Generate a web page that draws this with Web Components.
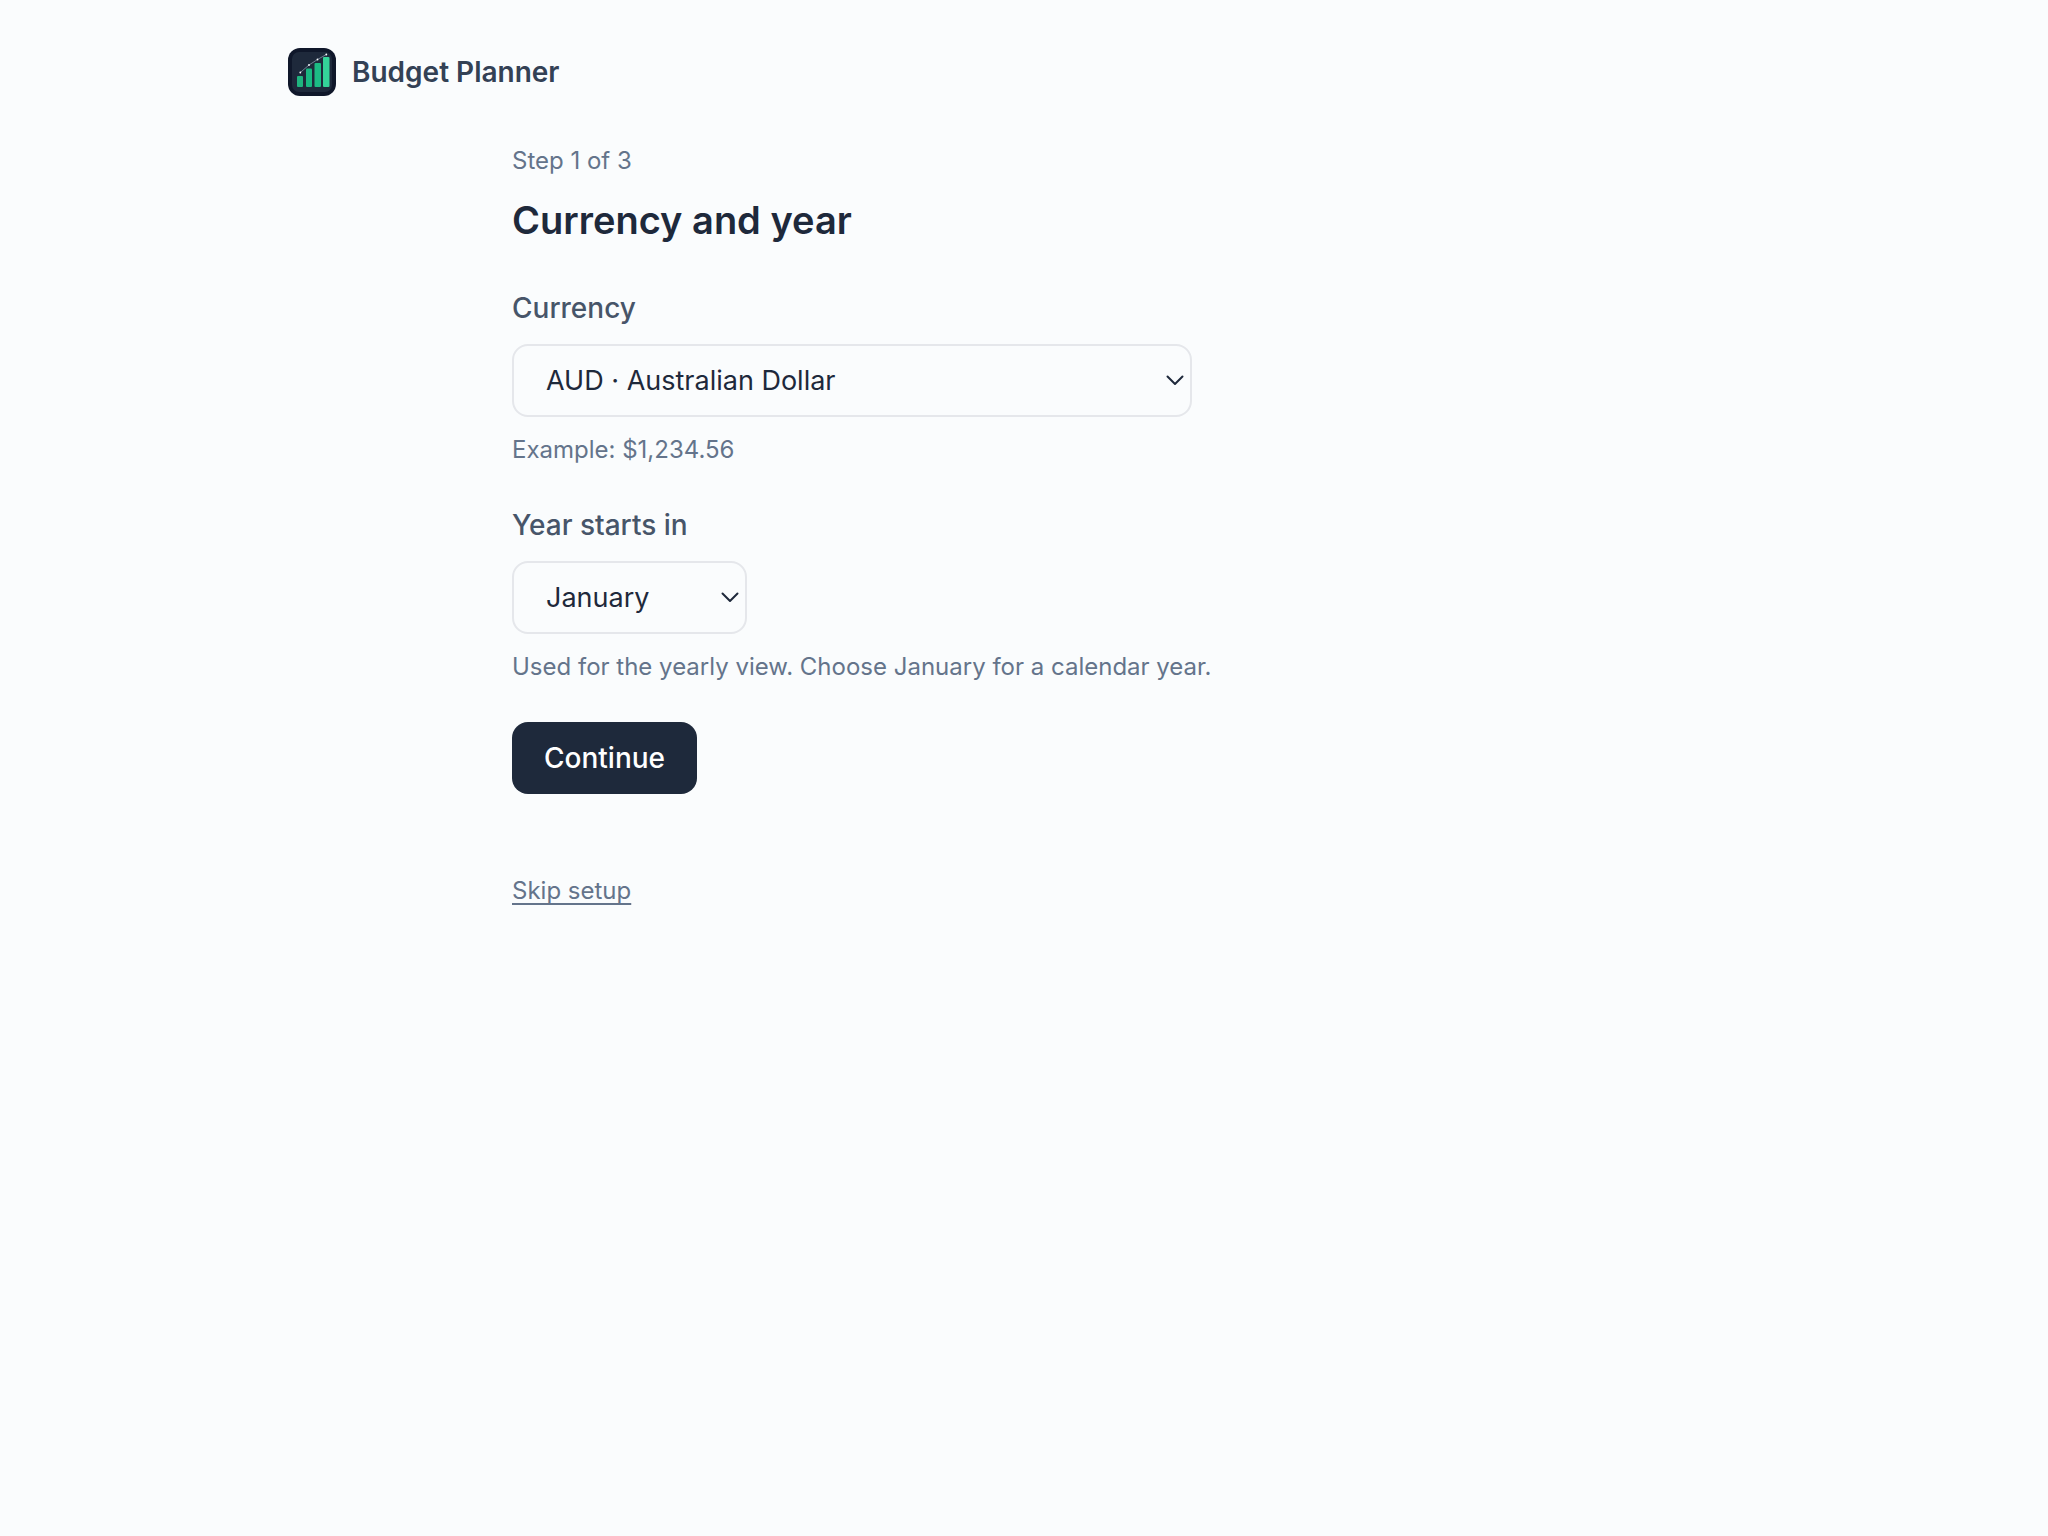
<!DOCTYPE html>
<html lang="en">
<head>
<meta charset="utf-8">
<meta name="viewport" content="width=device-width, initial-scale=1">
<title>Budget Planner</title>
<style>
  :root {
    --bg: #fafcfd;
    --ink: #1e293b;
    --heading: #334155;
    --label: #475569;
    --muted: #64748b;
    --line: #e5e7eb;
  }
  body {
    margin: 0;
    background: var(--bg);
    color: var(--ink);
    font-family: Inter, "Liberation Sans", sans-serif;
    font-size: 28px;
    line-height: 40px;
  }
</style>
</head>
<body>
<setup-page>
  <brand-bar slot="header">Budget Planner</brand-bar>
  <setup-step step="Step 1 of 3" heading="Currency and year">
    <select-field label="Currency" hint="Example: $1,234.56" style="--field-width: 680px">
      <option>AUD · Australian Dollar</option>
    </select-field>
    <select-field label="Year starts in" hint="Used for the yearly view. Choose January for a calendar year." style="--field-width: 235px">
      <option>January</option>
    </select-field>
    <primary-button slot="action">Continue</primary-button>
    <text-link slot="footer" href="#skip">Skip setup</text-link>
  </setup-step>
</setup-page>

<script>
const attach = (host, html) => {
  const root = host.attachShadow({ mode: "open" });
  root.innerHTML = html;
  return root;
};

// Centred page shell: header row above the main column.
customElements.define("setup-page", class extends HTMLElement {
  constructor() {
    super();
    attach(this, `
      <style>
        :host { display: block; }
        .shell { max-width: 1472px; margin: 0 auto; padding: 48px 32px; display: flex; flex-direction: column; gap: 48px; }
        main { width: 100%; max-width: 1024px; margin: 0 auto; }
      </style>
      <div class="shell">
        <header><slot name="header"></slot></header>
        <main><slot></slot></main>
      </div>`);
  }
});

customElements.define("brand-bar", class extends HTMLElement {
  constructor() {
    super();
    attach(this, `
      <style>
        :host { display: flex; align-items: center; gap: 16px; color: var(--heading); font-weight: 600; }
        svg { width: 48px; height: 48px; flex: none; }
      </style>
      <svg viewBox="0 0 48 48" aria-hidden="true">
        <rect width="48" height="48" rx="12" fill="#0f172a"/>
        <rect x="4" y="4" width="40" height="40" rx="7" fill="#1e293b"/>
        <rect x="9" y="28" width="6" height="11" rx="1" fill="#1fb47f"/>
        <rect x="18" y="20.5" width="6" height="18.500" rx="1" fill="#18b881"/>
        <rect x="26.500" y="15" width="6.500" height="24" rx="1" fill="#1cba84"/>
        <rect x="35" y="9" width="6.500" height="30" rx="1" fill="#34d399"/>
        <path d="M12.300 24.500 L21 17 L29.500 11.500 L38.300 6.500" fill="none" stroke="#94a3b8" stroke-width=".7"/>
        <g fill="#f8fafc"><circle cx="12.300" cy="24.500" r=".9"/><circle cx="21" cy="17" r=".9"/><circle cx="29.500" cy="11.500" r=".9"/><circle cx="38.300" cy="6.500" r=".9"/></g>
      </svg>
      <span><slot></slot></span>`);
  }
});

customElements.define("setup-step", class extends HTMLElement {
  constructor() {
    super();
    const root = attach(this, `
      <style>
        :host { display: block; }
        p { margin: 0 0 14px; font-size: 24px; line-height: 34px; color: var(--muted); }
        h1 { margin: 0 0 40px; font-size: 38px; line-height: 56px; font-weight: 600; }
        form { display: flex; flex-direction: column; align-items: flex-start; gap: 38px; }
        footer { margin-top: 80px; }
      </style>
      <p></p>
      <h1></h1>
      <form>
        <slot></slot>
        <slot name="action"></slot>
      </form>
      <footer><slot name="footer"></slot></footer>`);
    root.querySelector("p").textContent = this.getAttribute("step");
    root.querySelector("h1").textContent = this.getAttribute("heading");
  }
});

// Labelled drop-down; its options are taken over from the light DOM.
customElements.define("select-field", class extends HTMLElement {
  constructor() {
    super();
    const root = attach(this, `
      <style>
        :host { display: flex; flex-direction: column; align-items: flex-start; gap: 16px; max-width: 100%; }
        label { font-weight: 500; color: var(--label); }
        .box { display: grid; align-items: center; width: var(--field-width); max-width: 100%; }
        .box > * { grid-area: 1 / 1; }
        select {
          appearance: none; box-sizing: border-box; width: 100%; height: 73px; margin: 0; padding: 0 48px 0 32px;
          border: 2px solid var(--line); border-radius: 16px; background: transparent; color: var(--ink);
          font: inherit; font-size: 27px;
        }
        svg { justify-self: end; width: 18px; height: 12px; margin-right: 8px; pointer-events: none; }
        p { margin: 0; font-size: 24px; line-height: 34px; color: var(--muted); }
      </style>
      <label for="control"></label>
      <div class="box">
        <select id="control" aria-describedby="hint"></select>
        <svg viewBox="0 0 18 12" aria-hidden="true"><path d="M1.500 1.500 L9 9 L16.500 1.500" fill="none" stroke="#1e293b" stroke-width="2" stroke-linecap="round" stroke-linejoin="round"/></svg>
      </div>
      <p id="hint"></p>`);
    root.querySelector("label").textContent = this.getAttribute("label");
    root.querySelector("p").textContent = this.getAttribute("hint");
    root.querySelector("select").append(...this.querySelectorAll("option"));
  }
});

customElements.define("primary-button", class extends HTMLElement {
  constructor() {
    super();
    attach(this, `
      <style>
        :host { display: block; }
        button { display: block; margin: 0; padding: 16px 32px; border: 0; border-radius: 16px; background: var(--ink); color: #fff; font: inherit; font-weight: 500; cursor: pointer; }
      </style>
      <button type="button"><slot></slot></button>`);
  }
});

customElements.define("text-link", class extends HTMLElement {
  constructor() {
    super();
    const root = attach(this, `
      <style>
        :host { display: block; font-size: 24px; line-height: 34px; }
        a { color: var(--muted); text-decoration: underline; text-decoration-thickness: 2px; text-underline-offset: 4px; text-decoration-skip-ink: none; }
      </style>
      <a><slot></slot></a>`);
    root.querySelector("a").href = this.getAttribute("href");
  }
});
</script>
</body>
</html>
